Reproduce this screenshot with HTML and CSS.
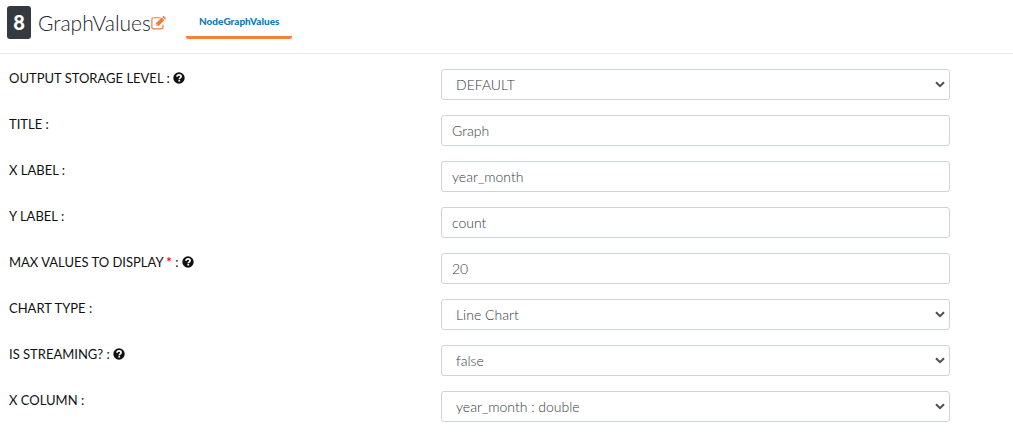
FILE: index.html
```html
<!DOCTYPE html>
<html lang="en">
<head>
<meta charset="utf-8">
<meta name="viewport" content="width=device-width, initial-scale=1">
<title>GraphValues</title>
<link rel="stylesheet" href="styles.css">
</head>
<body>
<svg class="sprite" aria-hidden="true">
  <symbol id="help" viewBox="0 0 12 12">
    <circle cx="6" cy="6" r="5.7" fill="#111"/>
    <path d="M4 4.8C4.1 3.5 4.9 2.9 6.1 2.9c1.200 0 2 .7 2 1.700C8.100 5.800 6.300 5.900 6.300 7.200" fill="none" stroke="#fff" stroke-width="1.700"/>
    <rect x="5.400" y="7.900" width="1.700" height="1.600" fill="#fff"/>
  </symbol>
</svg>
<header class="header">
  <span class="badge">8</span>
  <h1 class="title">GraphValues</h1>
  <button class="edit" type="button" aria-label="Edit name">
    <svg viewBox="0 0 14 13" width="15" height="14">
      <path d="M9 1.600H2.600C1.500 1.600.8 2.300.8 3.400v6.800c0 1.100.7 1.800 1.800 1.800h6.800c1.100 0 1.800-.7 1.800-1.800V8.200" fill="none" stroke="#f07c3e" stroke-width="1.100"/>
      <path d="M4.600 9.300V6.800L10 1.400l2.500 2.500-5.400 5.400zM10.600.8l.5-.5c.3-.3.8-.3 1.100 0l1.400 1.400c.3.3.3.8 0 1.100l-.5.5z" fill="#f07c3e"/>
      <path d="M5.200 7.400v1.300h1.300" fill="none" stroke="#fff" stroke-width=".6"/>
    </svg>
  </button>
  <a class="tab" href="#form">NodeGraphValues</a>
</header>
<form class="form" id="form">
  <div class="row">
    <label class="label" for="storage">OUTPUT STORAGE LEVEL : <svg class="help"><use href="#help"/></svg></label>
    <div class="field"><select class="control select" id="storage"><option>DEFAULT</option></select><svg class="arrow" viewBox="0 0 10 7"><path d="M1 1.200l4 4 4-4"/></svg></div>
  </div>
  <div class="row">
    <label class="label" for="title">TITLE :</label>
    <div class="field"><input class="control" id="title" type="text" value="Graph"></div>
  </div>
  <div class="row">
    <label class="label" for="xlabel">X LABEL :</label>
    <div class="field"><input class="control" id="xlabel" type="text" value="year_month"></div>
  </div>
  <div class="row">
    <label class="label" for="ylabel">Y LABEL :</label>
    <div class="field"><input class="control" id="ylabel" type="text" value="count"></div>
  </div>
  <div class="row">
    <label class="label" for="max">MAX VALUES TO DISPLAY <span class="required">*</span> : <svg class="help"><use href="#help"/></svg></label>
    <div class="field"><input class="control" id="max" type="text" value="20"></div>
  </div>
  <div class="row">
    <label class="label" for="chart">CHART TYPE :</label>
    <div class="field"><select class="control select" id="chart"><option>Line Chart</option></select><svg class="arrow" viewBox="0 0 10 7"><path d="M1 1.200l4 4 4-4"/></svg></div>
  </div>
  <div class="row">
    <label class="label" for="streaming">IS STREAMING? : <svg class="help"><use href="#help"/></svg></label>
    <div class="field"><select class="control select" id="streaming"><option>false</option></select><svg class="arrow" viewBox="0 0 10 7"><path d="M1 1.200l4 4 4-4"/></svg></div>
  </div>
  <div class="row">
    <label class="label" for="xcolumn">X COLUMN :</label>
    <div class="field"><select class="control select" id="xcolumn"><option>year_month : double</option></select><svg class="arrow" viewBox="0 0 10 7"><path d="M1 1.200l4 4 4-4"/></svg></div>
  </div>
</form>
</body>
</html>
```
FILE: styles.css
```css
* { box-sizing: border-box; }
body {
  margin: 0;
  background: #fff;
  color: #212529;
  font-family: Lato, "Open Sans", sans-serif;
  font-size: 13px;
}
.sprite { position: absolute; width: 0; height: 0; }
.header {
  display: flex;
  align-items: center;
  padding: 6px 7px 14px;
  border-bottom: 1px solid #e6e8ea;
}
.badge {
  width: 24px;
  margin-right: 7px;
  border-radius: 3px;
  background: #343a40;
  color: #fff;
  font-size: 20px;
  font-weight: 900;
  line-height: 33px;
  text-align: center;
}
.title {
  margin: 0;
  font-size: 21px;
  font-weight: 300;
  line-height: 32px;
}
.edit {
  display: flex;
  margin: 0 20px 0 0;
  padding: 0;
  border: 0;
  background: none;
}
.tab {
  align-self: flex-end;
  padding: 0 13px;
  border-bottom: 3px solid #f5803e;
  border-radius: 2px;
  color: #1279b5;
  font-size: 10px;
  font-weight: 900;
  line-height: 30px;
  text-decoration: none;
}
.form {
  display: grid;
  gap: 15px;
  padding: 15px 0 22px 9px;
}
.row {
  display: grid;
  grid-template-columns: 432fr 509fr 63fr;
}
.label { line-height: 19px; color: #111; }
.help { width: 12px; height: 12px; vertical-align: -1px; }
.required { color: #f00; font-weight: 700; }
.field { position: relative; }
.control {
  display: block;
  width: 100%;
  height: 31px;
  padding: 0 10px;
  border: 1px solid #ced4da;
  border-radius: 3px;
  background: #fff;
  color: #343a40;
  font: 300 14px Lato, "Open Sans", sans-serif;
}
.select { appearance: none; padding: 0 14px; }
.arrow {
  position: absolute;
  top: 12px;
  right: 5px;
  width: 10px;
  height: 7px;
  fill: none;
  stroke: #495057;
  stroke-width: 2;
  pointer-events: none;
}
```
